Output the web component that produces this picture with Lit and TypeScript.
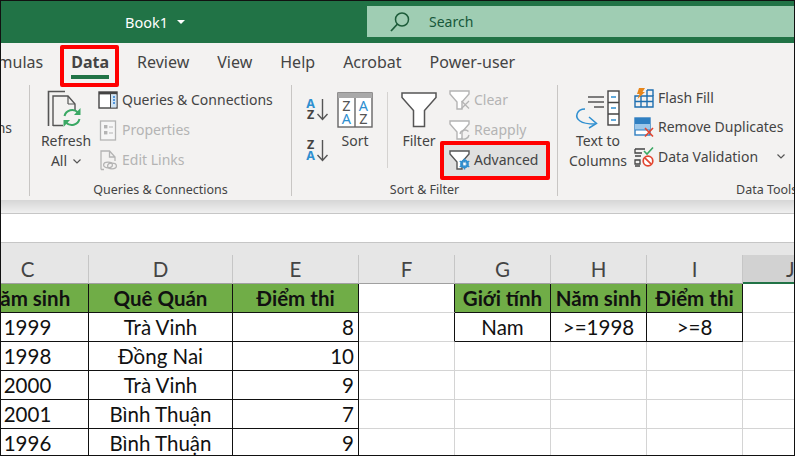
import { html, svg, css, LitElement } from "lit"
import { customElement } from "lit/decorators.js"

const DARK = "#555"
const GREY = "#b4b4b4"
const BLUE = "#2f8fd0"

const icon = (w: number, h: number, body: unknown) => html`
  <svg width=${w} height=${h} viewBox="0 0 ${w} ${h}" fill="none">${body}</svg>
`

const refreshIcon = icon(38, 38, svg`
  <path d="M1.5 36V1.5H18" stroke=${DARK} stroke-width="1.6"/>
  <path d="M6 36V6H21L28 14V20M6 35.5H16" stroke=${DARK} stroke-width="1.4"/>
  <path d="M21 14H28M21 6V14" stroke=${DARK} stroke-width="1.2"/>
  <path d="M17.5 26A8 8 0 0 1 31 22.5" stroke="#3aa864" stroke-width="2"/>
  <path d="M33.5 18V25H27Z" fill="#3aa864"/>
  <path d="M32.5 29A8 8 0 0 1 19 32.5" stroke="#3aa864" stroke-width="2"/>
  <path d="M16.5 37V30H23Z" fill="#3aa864"/>
`)

const queriesIcon = icon(20, 20, svg`
  <rect x="1" y="2" width="18" height="16" fill="#fff" stroke="#444" stroke-width="1.4"/>
  <rect x="1" y="2" width="18" height="2.4" fill="#444"/>
  <rect x="13" y="4.4" width="5.4" height="13" fill="#cfe3f3"/>
  <path d="M12.5 4V18" stroke="#444"/>
  <path d="M15 7H17M15 10H17M15 13H17" stroke="#2b7cd3" stroke-width="1.5"/>
`)

const propertiesIcon = icon(20, 20, svg`
  <rect x="2.5" y="1" width="15" height="19" fill="#f6f6f6" stroke=${GREY} stroke-width="1.3"/>
  <rect x="6" y="5" width="3.4" height="3.4" fill=${GREY}/>
  <rect x="6" y="11" width="3.4" height="3.4" fill=${GREY}/>
  <path d="M11 7H15M11 13H15" stroke=${GREY}/>
`)

const linksIcon = icon(20, 20, svg`
  <path d="M3 19.5V1H11.5L17 7V11M3 19.5H6M11.5 1V7H17" stroke=${GREY} stroke-width="1.3"/>
  <ellipse cx="10" cy="15" rx="4.4" ry="2.8" stroke=${GREY} stroke-width="1.3"/>
  <ellipse cx="14" cy="16" rx="4.4" ry="2.8" stroke=${GREY} stroke-width="1.3"/>
`)

const sortSmall = (top: string, bottom: string, topColor: string, bottomColor: string) =>
  icon(24, 24, svg`
    <text x="6.5" y="11" class="az" text-anchor="middle" fill=${topColor}>${top}</text>
    <text x="6.5" y="22" class="az" text-anchor="middle" fill=${bottomColor}>${bottom}</text>
    <path d="M18.5 2V22M13.5 17L18.5 22.5L23.5 17" stroke=${DARK} stroke-width="1.4"/>
  `)

const sortIcon = icon(36, 36, svg`
  <rect x="1" y="1" width="34" height="34" fill="#fff" stroke="#666" stroke-width="1.4"/>
  <rect x="1" y="1" width="34" height="5" fill="#a9a9a9"/>
  <path d="M18 6V35" stroke="#666" stroke-width="1.4"/>
  <text x="9.5" y="19" class="az-big" text-anchor="middle" fill=${DARK}>Z</text>
  <text x="9.5" y="32" class="az-big" text-anchor="middle" fill=${BLUE}>A</text>
  <text x="26.5" y="19" class="az-big" text-anchor="middle" fill=${BLUE}>A</text>
  <text x="26.5" y="32" class="az-big" text-anchor="middle" fill=${DARK}>Z</text>
`)

const filterIcon = icon(36, 36, svg`
  <path d="M1 1H35V5.5L23.5 18.5V34.5H12.5V18.5L1 5.5Z" fill="#fff" stroke=${DARK} stroke-width="1.5"/>
`)

const smallFunnel = (color: string, extra: unknown) =>
  icon(22, 20, svg`
    <path d="M1 1H20V4L13 12V19H8V12L1 4Z" fill="#fff" stroke=${color} stroke-width="1.4"/>
    ${extra}
  `)

const clearIcon = smallFunnel(GREY, svg`
  <path d="M12.5 11L20 18.5M20 11L12.5 18.5" stroke=${GREY} stroke-width="1.3"/>
`)

const reapplyIcon = smallFunnel(GREY, svg`
  <path d="M11 14A5 5 0 0 1 19.5 11.5M20 15A5 5 0 0 1 12 18" stroke=${GREY} stroke-width="1.4"/>
`)

const advancedIcon = smallFunnel(DARK, svg`
  <circle cx="15.5" cy="14" r="3.4" stroke=${BLUE} stroke-width="2"/>
  <path d="M15.5 8.5V19.5M10.7 11.2L20.3 16.8M20.3 11.2L10.7 16.8" stroke=${BLUE} stroke-width="1.4"/>
  <circle cx="15.5" cy="14" r="1.4" fill="#fff"/>
`)

const textColumnsIcon = icon(46, 38, svg`
  <path d="M13 7H29M13 12H29M19 17H29" stroke=${DARK} stroke-width="1.4"/>
  <rect x="33" y="1" width="11" height="34" fill="#fff" stroke="#444" stroke-width="1.4"/>
  <path d="M33 12.5H44M33 24H44" stroke="#444" stroke-width="1.4"/>
  <path d="M36 7H41M36 18H41M36 30H41" stroke=${BLUE} stroke-width="1.5"/>
  <path d="M10 19C2 19 -1 27 5 31C9 34 14 34 20 34" stroke=${BLUE} stroke-width="1.5"/>
  <path d="M14 27L21.5 33.5L14 38" stroke=${BLUE} stroke-width="1.5"/>
`)

const flashIcon = icon(20, 20, svg`
  <path d="M1 8H19V19H1ZM1 13.5H19M7 8V19M13 2V19" stroke="#1f6fb0" stroke-width="1.4"/>
  <path d="M13 2H19V8" stroke="#1f6fb0" stroke-width="1.4"/>
  <path d="M5 0H11L8.5 4H11L3.5 11L5.5 6H3Z" fill="#e8861a"/>
`)

const duplicatesIcon = icon(20, 20, svg`
  <rect x="1" y="1" width="15" height="17" fill="#fff" stroke="#2f7fc1" stroke-width="1.4"/>
  <rect x="1" y="1" width="15" height="6" fill="#2f7fc1"/>
  <rect x="1" y="7" width="15" height="6" fill="#9cc7ea"/>
  <path d="M1 13H16" stroke="#2f7fc1"/>
  <path d="M11 11L19 19.5M19 11L11 19.5" stroke="#e2452f" stroke-width="1.6"/>
`)

const validationIcon = icon(20, 20, svg`
  <path d="M1 2H11M1 2V6H8M1 9H7M1 13H6V17H1ZM1 19H6" stroke="#444" stroke-width="1.3"/>
  <path d="M10 4L13 7L19 0.5" stroke="#3aa864" stroke-width="1.6"/>
  <circle cx="14" cy="14" r="4.8" fill="#fff" stroke="#e2452f" stroke-width="1.7"/>
  <path d="M10.8 10.8L17.2 17.2" stroke="#e2452f" stroke-width="1.7"/>
`)

const searchIcon = icon(22, 22, svg`
  <circle cx="13" cy="8.5" r="6.5" stroke="#1d5c3a" stroke-width="1.5"/>
  <path d="M8.5 13L2 20" stroke="#1d5c3a" stroke-width="1.8"/>
`)

const chevron = html`
  <svg width="8" height="5" viewBox="0 0 8 5" fill="none">
    <path d="M0.5 0.5L4 4L7.5 0.5" stroke=${DARK} stroke-width="1.2"/>
  </svg>
`

const COLUMNS = ["C", "D", "E", "F", "G", "H", "I", "J"]

const ROWS = [
  ["1999", "Trà Vinh", "8"],
  ["1998", "Đồng Nai", "10"],
  ["2000", "Trà Vinh", "9"],
  ["2001", "Bình Thuận", "7"],
  ["1996", "Bình Thuận", "9"],
]

const CRITERIA_HEAD = ["Giới tính", "Năm sinh", "Điểm thi"]
const CRITERIA = ["Nam", ">=1998", ">=8"]

@customElement("app-root")
export default class AppRoot extends LitElement {
  static styles = css`
    :host {
      display: block;
      position: relative;
      width: 795px;
      height: 456px;
      overflow: hidden;
      background: #fff;
      font-family: "Noto Sans", sans-serif;
      color: #444;
    }

    :host::after {
      content: "";
      position: absolute;
      inset: 0;
      border: 1px solid #111;
      pointer-events: none;
    }

    svg {
      display: block;
      overflow: visible;
    }

    .az {
      font: 700 12.5px "Noto Sans", sans-serif;
    }

    .az-big {
      font: 400 14.5px "Noto Sans", sans-serif;
    }

    .titlebar {
      display: flex;
      align-items: center;
      height: 43px;
      background: #217346;
      color: #fff;
      font-size: 14.5px;
    }

    .book {
      display: flex;
      align-items: center;
      gap: 9px;
      width: 367px;
      padding-left: 125px;
      box-sizing: border-box;
    }

    .book i {
      width: 0;
      height: 0;
      border: 4px solid transparent;
      border-top: 4px solid #fff;
      border-bottom: 0;
    }

    .search {
      flex: 1;
      display: flex;
      align-items: center;
      gap: 18px;
      height: 31px;
      padding-left: 22px;
      background: #9fcdb3;
      color: #17583a;
      font-size: 14px;
    }

    .tabs {
      display: flex;
      gap: 28px;
      height: 42px;
      margin-left: -27px;
      background: #f3f2f1;
      font-size: 16px;
      line-height: 38px;
      white-space: nowrap;
    }

    .tab {
      position: relative;
    }

    .tab.active {
      font-weight: 700;
    }

    .tab.active::before {
      content: "";
      position: absolute;
      left: 0;
      right: 0;
      bottom: 6px;
      height: 4px;
      background: #217346;
    }

    .tab.active::after {
      content: "";
      position: absolute;
      left: -11px;
      right: -10px;
      top: 2px;
      height: 42px;
      box-sizing: border-box;
      border: 4px solid #f00;
      border-radius: 2px;
    }

    .ribbon {
      display: flex;
      height: 115px;
      background: #f3f2f1;
      font-size: 14px;
      line-height: 20px;
      white-space: nowrap;
    }

    .group {
      display: flex;
      flex-direction: column;
      box-sizing: border-box;
      height: 111px;
      border-right: 1px solid #c8c6c4;
    }

    .group:last-child {
      flex: 1;
      border-right: 0;
    }

    .controls {
      flex: 1;
      display: flex;
    }

    .caption {
      height: 16px;
      margin-bottom: -2px;
      font-size: 12.5px;
      line-height: 16px;
      text-align: center;
    }

    .g0 { width: 30px; }
    .g1 { width: 262px; }
    .g2 { width: 266px; }
    .g3 { width: 237px; }

    .g1 .controls { padding-left: 5px; }
    .g2 .controls { padding-left: 12px; }
    .g3 .controls { padding-left: 11px; }

    .g0 .controls {
      margin-left: -40px;
      padding-top: 33px;
    }

    .g3 .caption {
      margin-left: 178px;
      text-align: left;
    }

    .big {
      display: flex;
      flex-direction: column;
      align-items: center;
      padding-top: 5px;
    }

    .big .art {
      display: flex;
      align-items: flex-end;
      height: 38px;
      margin-bottom: 3px;
    }

    .w62 { width: 62px; }
    .w48 { width: 48px; }
    .w58 { width: 58px; }

    .line {
      display: flex;
      align-items: center;
      gap: 6px;
    }

    .stack {
      display: flex;
      flex-direction: column;
    }

    .queries {
      margin-left: 1px;
    }

    .queries .row {
      gap: 4px;
    }

    .filters {
      margin-left: 6px;
    }

    .row {
      position: relative;
      display: flex;
      align-items: center;
      gap: 3px;
      height: 30px;
    }

    .row > * {
      position: relative;
    }

    .off {
      color: #b4b4b4;
    }

    .row.marked::before {
      content: "";
      position: absolute;
      left: -9px;
      top: -4px;
      width: 110px;
      height: 39px;
      box-sizing: border-box;
      border: 4px solid #f00;
      border-radius: 2px;
      background: #e0e0e0;
    }

    .sort-pair {
      width: 27px;
      padding-top: 12px;
      gap: 17px;
    }

    .inner-sep {
      width: 1px;
      height: 76px;
      margin: 7px 7px 0 8px;
      background: #d4d2d0;
    }

    .tools {
      margin: -2px 0 0 7px;
    }

    .tools .row {
      height: 29.5px;
      gap: 4px;
    }

    .row .more {
      margin-left: 15px;
    }

    .shade {
      height: 13px;
      background: linear-gradient(#d6d6d6, #f0f0f0);
      border-bottom: 1px solid #c6c6c6;
    }

    .formula {
      height: 28px;
      background: #fff;
      border-bottom: 1px solid #c6c6c6;
    }

    .sheet {
      display: grid;
      grid-template-columns: 122px 144px 126px 96px 96px 96px 96px 53px;
      grid-template-rows: 12px repeat(7, 29px);
      margin-left: -33px;
      background: #fff;
      font-family: Lato, sans-serif;
      font-size: 20.5px;
      color: #111;
    }

    .strip {
      grid-column: 1 / -1;
      background: #e6e6e6;
    }

    .cell {
      display: flex;
      align-items: center;
      justify-content: center;
      box-sizing: border-box;
      border-right: 1px solid #d4d4d4;
      border-bottom: 1px solid #d4d4d4;
      white-space: nowrap;
    }

    .col {
      background: #e6e6e6;
      color: #444;
      border-right-color: #c6c6c6;
      border-bottom-color: #a0a0a0;
    }

    .col.sel {
      background: #d2d2d2;
      border-bottom: 2px solid #217346;
      justify-content: flex-start;
      padding-left: 43px;
    }

    .edge {
      border-right-color: #111;
    }

    .boxed {
      border-right-color: #111;
      border-bottom-color: #111;
    }

    .head {
      background: #70ad47;
      font-weight: 700;
    }

    .num {
      justify-content: flex-end;
      padding-right: 4px;
    }
  `

  private _dataRow(row: string[], i: number) {
    const crit = i === 0
    return html`
      <div class="cell boxed">${row[0]}</div>
      <div class="cell boxed">${row[1]}</div>
      <div class="cell boxed num">${row[2]}</div>
      <div class="cell ${crit ? "edge" : ""}"></div>
      ${[0, 1, 2].map((c) =>
        crit ? html`<div class="cell boxed">${CRITERIA[c]}</div>` : html`<div class="cell"></div>`
      )}
      <div class="cell"></div>
    `
  }

  protected render() {
    return html`
      <div class="titlebar">
        <div class="book">Book1 <i></i></div>
        <div class="search">${searchIcon} Search</div>
      </div>

      <div class="tabs">
        <span class="tab">Formulas</span>
        <span class="tab active">Data</span>
        <span class="tab">Review</span>
        <span class="tab">View</span>
        <span class="tab">Help</span>
        <span class="tab">Acrobat</span>
        <span class="tab">Power-user</span>
      </div>

      <div class="ribbon">
        <div class="group g0">
          <div class="controls">Options</div>
        </div>

        <div class="group g1">
          <div class="controls">
            <div class="big w62">
              <div class="art">${refreshIcon}</div>
              <div>Refresh</div>
              <div class="line">All ${chevron}</div>
            </div>
            <div class="stack queries">
              <div class="row">${queriesIcon}<span>Queries &amp; Connections</span></div>
              <div class="row off">${propertiesIcon}<span>Properties</span></div>
              <div class="row off">${linksIcon}<span>Edit Links</span></div>
            </div>
          </div>
          <div class="caption">Queries &amp; Connections</div>
        </div>

        <div class="group g2">
          <div class="controls">
            <div class="stack sort-pair">
              ${sortSmall("A", "Z", BLUE, "#444")}
              ${sortSmall("Z", "A", "#444", BLUE)}
            </div>
            <div class="big w48">
              <div class="art">${sortIcon}</div>
              <div>Sort</div>
            </div>
            <div class="inner-sep"></div>
            <div class="big w48">
              <div class="art">${filterIcon}</div>
              <div>Filter</div>
            </div>
            <div class="stack filters">
              <div class="row off">${clearIcon}<span>Clear</span></div>
              <div class="row off">${reapplyIcon}<span>Reapply</span></div>
              <div class="row marked">${advancedIcon}<span>Advanced</span></div>
            </div>
          </div>
          <div class="caption">Sort &amp; Filter</div>
        </div>

        <div class="group g3">
          <div class="controls">
            <div class="big w58">
              <div class="art">${textColumnsIcon}</div>
              <div>Text to</div>
              <div>Columns</div>
            </div>
            <div class="stack tools">
              <div class="row">${flashIcon}<span>Flash Fill</span></div>
              <div class="row">${duplicatesIcon}<span>Remove Duplicates</span></div>
              <div class="row">${validationIcon}<span>Data Validation</span><span class="more">${chevron}</span></div>
            </div>
          </div>
          <div class="caption">Data Tools</div>
        </div>
      </div>

      <div class="shade"></div>
      <div class="formula"></div>

      <div class="sheet">
        <div class="strip"></div>
        ${COLUMNS.map((c) => html`<div class="cell col ${c === "J" ? "sel" : ""}">${c}</div>`)}

        <div class="cell boxed head">Năm sinh</div>
        <div class="cell boxed head">Quê Quán</div>
        <div class="cell boxed head">Điểm thi</div>
        <div class="cell edge"></div>
        ${CRITERIA_HEAD.map((t) => html`<div class="cell boxed head">${t}</div>`)}
        <div class="cell"></div>

        ${ROWS.map((row, i) => this._dataRow(row, i))}
      </div>
    `
  }
}
